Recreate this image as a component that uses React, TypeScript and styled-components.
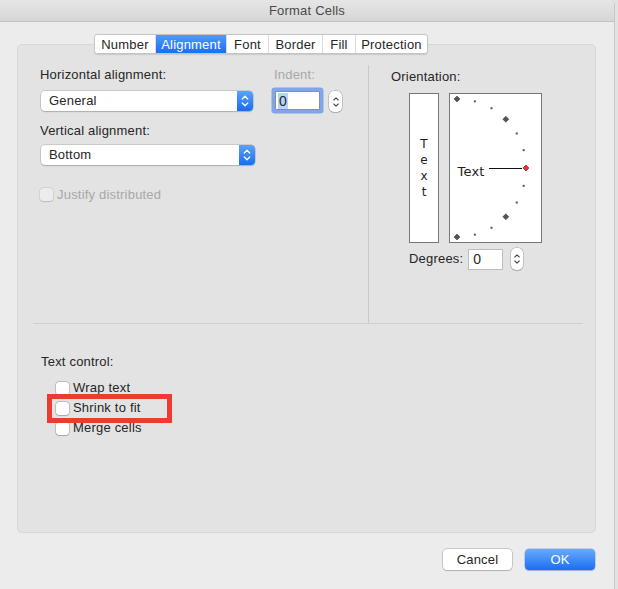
import React from "react";
import styled, { createGlobalStyle } from "styled-components";

const Global = createGlobalStyle`
  html, body { margin: 0; padding: 0; background: #e2e2e2; }
  body { font-family: "Liberation Sans", Arial, sans-serif; font-size: 13px; color: #262626; }
  * { box-sizing: border-box; }
`;

const Window = styled.div`
  width: 615px;
  height: 589px;
  background: #ececec;
  border-right: 1px solid #c9c9c9;
  border-radius: 5px 5px 0 0;
  display: flex;
  flex-direction: column;
  overflow: hidden;
  letter-spacing: 0.2px;
`;

const TitleBar = styled.div`
  height: 22px;
  flex: none;
  display: flex;
  align-items: center;
  justify-content: center;
  background: linear-gradient(#e6e6e6, #d6d6d6);
  border-bottom: 1px solid #c4c4c4;
  color: #4a4a4a;
  font-size: 13px;
`;

const Body = styled.div`
  flex: 1;
  display: flex;
  flex-direction: column;
  padding-top: 12px;
`;

const TabBar = styled.div`
  position: relative;
  z-index: 1;
  align-self: flex-start;
  margin-left: 94px;
  height: 20px;
  display: flex;
  background: #fff;
  border: 1px solid #c4c4c4;
  border-radius: 4px;
  box-shadow: 0 0.5px 1px rgba(0, 0, 0, 0.12);
  overflow: hidden;
`;

const Tab = styled.div<{ $w: number; $active?: boolean }>`
  width: ${(p) => p.$w}px;
  flex: none;
  display: flex;
  align-items: center;
  justify-content: center;
  font-size: 13px;
  color: ${(p) => (p.$active ? "#fff" : "#262626")};
  background: ${(p) => (p.$active ? "linear-gradient(#4f9bf8, #1b6df3)" : "#fff")};
  & + & {
    border-left: 1px solid ${(p) => (p.$active ? "#2f7cf4" : "#dcdcdc")};
  }
`;

const ContentBox = styled.div`
  margin: -10px 0 0 17px;
  width: 579px;
  height: 489px;
  background: #e3e3e3;
  border: 1px solid #d7d7d7;
  border-radius: 5px;
  display: flex;
  flex-direction: column;
`;

const TopSection = styled.div`
  height: 278px;
  display: flex;
`;

const LeftPane = styled.div`
  width: 350px;
  padding: 22px 0 0 22px;
  display: flex;
  flex-direction: column;
`;

const Row = styled.div`
  display: flex;
  align-items: flex-start;
`;

const Col = styled.div<{ $ml?: number }>`
  display: flex;
  flex-direction: column;
  margin-left: ${(p) => p.$ml ?? 0}px;
`;

const Label = styled.div<{ $disabled?: boolean; $mt?: number; $pl?: number }>`
  height: 16px;
  line-height: 16px;
  font-size: 13px;
  margin-top: ${(p) => p.$mt ?? 0}px;
  padding-left: ${(p) => p.$pl ?? 0}px;
  color: ${(p) => (p.$disabled ? "#a8a8a8" : "#262626")};
  white-space: nowrap;
`;

const SelectBox = styled.div<{ $w: number; $mt: number }>`
  width: ${(p) => p.$w}px;
  height: 20px;
  margin: ${(p) => p.$mt}px 0 0 1px;
  display: flex;
  background: #fff;
  border-radius: 4px;
  box-shadow: 0 0 0 0.5px rgba(0, 0, 0, 0.22), 0 1px 1.5px rgba(0, 0, 0, 0.15);
`;

const SelectText = styled.div`
  flex: 1;
  padding-left: 8px;
  line-height: 20px;
  font-size: 13px;
`;

const SelectArrow = styled.div`
  width: 16px;
  display: flex;
  align-items: center;
  justify-content: center;
  border-radius: 0 4px 4px 0;
  background: linear-gradient(#5ca3f9, #1a6cf2);
`;

const FocusInput = styled.div`
  width: 45px;
  height: 19px;
  margin: 8px 0 0 4px;
  background: #fff;
  border: 1px solid #8f8f8f;
  box-shadow: 0 0 0 3.5px #7ea7ea;
  border-radius: 1px;
  display: flex;
  align-items: center;
  padding-left: 2px;
`;

const Selected = styled.span`
  background: #b4d4fd;
  font-size: 14px;
  line-height: 16px;
  padding: 0 1px;
`;

const StepperBox = styled.div<{ $ml: number; $mt?: number; $w?: number; $h?: number }>`
  width: ${(p) => p.$w ?? 13}px;
  height: ${(p) => p.$h ?? 21}px;
  margin-left: ${(p) => p.$ml}px;
  margin-top: ${(p) => p.$mt ?? 0}px;
  background: #fff;
  border-radius: 5px;
  box-shadow: 0 0 0 0.5px rgba(0, 0, 0, 0.28), 0 1px 1px rgba(0, 0, 0, 0.12);
  display: flex;
  align-items: center;
  justify-content: center;
`;

const CheckRow = styled.div<{ $mt?: number; $h?: number }>`
  display: flex;
  align-items: center;
  height: ${(p) => p.$h ?? 20}px;
  margin-top: ${(p) => p.$mt ?? 0}px;
  gap: 4px;
`;

const Check = styled.div<{ $disabled?: boolean }>`
  width: 13px;
  height: 13px;
  border-radius: 3px;
  background: ${(p) => (p.$disabled ? "#ececec" : "#fff")};
  box-shadow: 0 0 0 0.5px ${(p) => (p.$disabled ? "rgba(0,0,0,0.12)" : "rgba(0,0,0,0.3)")},
    0 0.5px 1px rgba(0, 0, 0, 0.12);
  flex: none;
`;

const RightPane = styled.div`
  flex: 1;
  margin-top: 20px;
  height: 258px;
  border-left: 1px solid #c9c9c9;
  padding: 4px 0 0 22px;
  display: flex;
  flex-direction: column;
`;

const OrientationRow = styled.div`
  display: flex;
  gap: 10px;
  margin: 8px 0 0 18px;
`;

const VerticalTextBox = styled.div`
  width: 30px;
  height: 150px;
  background: #fff;
  border: 1px solid #777;
  display: flex;
  flex-direction: column;
  align-items: center;
  justify-content: center;
  font-family: "DejaVu Sans", sans-serif;
  font-size: 12px;
  line-height: 16px;
  color: #1e1e1e;
  letter-spacing: 0;
`;

const DialBox = styled.div`
  width: 93px;
  height: 150px;
  background: #fff;
  border: 1px solid #777;
  svg { display: block; }
`;

const DegreesRow = styled.div`
  display: flex;
  align-items: center;
  margin: 5px 0 0 18px;
`;

const SmallInput = styled.div`
  width: 35px;
  height: 21px;
  margin-left: 5px;
  background: #fff;
  border: 1px solid #bdbdbd;
  display: flex;
  align-items: center;
  padding-left: 4px;
  font-size: 14px;
`;

const Divider = styled.div`
  height: 1px;
  background: #cfcfcf;
  margin: 0 12px 0 15px;
`;

const BottomSection = styled.div`
  padding: 30px 0 0 23px;
  display: flex;
  flex-direction: column;
`;

const CheckList = styled.div`
  position: relative;
  margin: 8px 0 0 15px;
  display: flex;
  flex-direction: column;
`;

const Highlight = styled.div`
  position: absolute;
  left: -9px;
  top: 16px;
  width: 125px;
  height: 29px;
  border: 5px solid #ec3b32;
  pointer-events: none;
`;

const Footer = styled.div`
  display: flex;
  justify-content: flex-end;
  gap: 13px;
  padding: 16px 19px 0 0;
`;

const Button = styled.div<{ $w: number; $primary?: boolean }>`
  width: ${(p) => p.$w}px;
  height: 21px;
  border-radius: 4px;
  display: flex;
  align-items: center;
  justify-content: center;
  font-size: 13px;
  color: ${(p) => (p.$primary ? "#fff" : "#262626")};
  background: ${(p) => (p.$primary ? "linear-gradient(#69abfa, #1b6ef4)" : "#fff")};
  box-shadow: ${(p) =>
    p.$primary
      ? "0 0 0 0.5px rgba(0,60,200,0.35), 0 1px 1px rgba(0,0,0,0.15)"
      : "0 0 0 0.5px rgba(0,0,0,0.3), 0 1px 1px rgba(0,0,0,0.12)"};
`;

const ArrowIcon = () => (
  <svg width="16" height="20" viewBox="0 0 16 20">
    <path d="M5.3 8 L8 5.3 L10.7 8" fill="none" stroke="#fff" strokeWidth="1.3" strokeLinecap="round" strokeLinejoin="round" />
    <path d="M5.3 12 L8 14.7 L10.7 12" fill="none" stroke="#fff" strokeWidth="1.3" strokeLinecap="round" strokeLinejoin="round" />
  </svg>
);

const StepIcon = () => (
  <svg width="12" height="20" viewBox="0 0 12 20">
    <path d="M3.8 8 L6 5.8 L8.2 8" fill="none" stroke="#4a4a4a" strokeWidth="1.1" strokeLinecap="round" strokeLinejoin="round" />
    <path d="M3.8 12 L6 14.2 L8.2 12" fill="none" stroke="#4a4a4a" strokeWidth="1.1" strokeLinecap="round" strokeLinejoin="round" />
  </svg>
);

const Select = ({ value, width, mt }: { value: string; width: number; mt: number }) => (
  <SelectBox $w={width} $mt={mt}>
    <SelectText>{value}</SelectText>
    <SelectArrow>
      <ArrowIcon />
    </SelectArrow>
  </SelectBox>
);

const Dial = () => {
  const cx = 7;
  const cy = 74;
  const r = 69;
  const pt = (deg: number) => {
    const a = (deg * Math.PI) / 180;
    return [cx + r * Math.cos(a), cy - r * Math.sin(a)];
  };
  const diamonds = [90, 45, -45, -90];
  const dots = [75, 60, 30, 15, -15, -30, -60, -75];
  const dia = (x: number, y: number) => `${x},${y - 3} ${x + 3},${y} ${x},${y + 3} ${x - 3},${y}`;
  const [rx, ry] = pt(0);
  return (
    <svg width="91" height="148" viewBox="0 0 91 148">
      {diamonds.map((d) => {
        const [x, y] = pt(d);
        return <polygon key={d} points={dia(x, y)} fill="#555" stroke="#333" strokeWidth="0.5" />;
      })}
      {dots.map((d) => {
        const [x, y] = pt(d);
        return <rect key={d} x={x - 1} y={y - 1} width="2" height="2" fill="#555" />;
      })}
      <polygon points={dia(rx, ry)} fill="#e8322b" stroke="#6b1a16" strokeWidth="0.6" />
      <line x1="39" y1="74.5" x2="72" y2="74.5" stroke="#111" strokeWidth="1" />
      <text x="7.5" y="82" fontFamily="DejaVu Sans, sans-serif" fontSize="13" fill="#1e1e1e">
        Text
      </text>
    </svg>
  );
};

const tabs: { label: string; w: number; active?: boolean }[] = [
  { label: "Number", w: 60 },
  { label: "Alignment", w: 71, active: true },
  { label: "Font", w: 42 },
  { label: "Border", w: 54 },
  { label: "Fill", w: 33 },
  { label: "Protection", w: 72 },
];

export default function App() {
  return (
    <>
      <Global />
      <Window>
        <TitleBar>Format Cells</TitleBar>
        <Body>
          <TabBar>
            {tabs.map((t) => (
              <Tab key={t.label} $w={t.w} $active={t.active}>
                {t.label}
              </Tab>
            ))}
          </TabBar>
          <ContentBox>
            <TopSection>
              <LeftPane>
                <Row>
                  <Col>
                    <Label>Horizontal alignment:</Label>
                    <Select value="General" width={212} mt={8} />
                  </Col>
                  <Col $ml={18}>
                    <Label $disabled $pl={3}>Indent:</Label>
                    <Row>
                      <FocusInput>
                        <Selected>0</Selected>
                      </FocusInput>
                      <StepperBox $ml={9} $mt={8}>
                        <StepIcon />
                      </StepperBox>
                    </Row>
                  </Col>
                </Row>
                <Label $mt={11}>Vertical alignment:</Label>
                <Select value="Bottom" width={214} mt={6} />
                <CheckRow $mt={20} $h={19}>
                  <Check $disabled />
                  <Label $disabled>Justify distributed</Label>
                </CheckRow>
              </LeftPane>
              <RightPane>
                <Label>Orientation:</Label>
                <OrientationRow>
                  <VerticalTextBox>
                    <span>T</span>
                    <span>e</span>
                    <span>x</span>
                    <span>t</span>
                  </VerticalTextBox>
                  <DialBox>
                    <Dial />
                  </DialBox>
                </OrientationRow>
                <DegreesRow>
                  <Label>Degrees:</Label>
                  <SmallInput>0</SmallInput>
                  <StepperBox $ml={8} $w={12} $h={22}>
                    <StepIcon />
                  </StepperBox>
                </DegreesRow>
              </RightPane>
            </TopSection>
            <Divider />
            <BottomSection>
              <Label>Text control:</Label>
              <CheckList>
                <CheckRow>
                  <Check />
                  <Label>Wrap text</Label>
                </CheckRow>
                <CheckRow>
                  <Check />
                  <Label>Shrink to fit</Label>
                </CheckRow>
                <CheckRow>
                  <Check />
                  <Label>Merge cells</Label>
                </CheckRow>
                <Highlight />
              </CheckList>
            </BottomSection>
          </ContentBox>
          <Footer>
            <Button $w={69}>Cancel</Button>
            <Button $w={70} $primary>
              OK
            </Button>
          </Footer>
        </Body>
      </Window>
    </>
  );
}
